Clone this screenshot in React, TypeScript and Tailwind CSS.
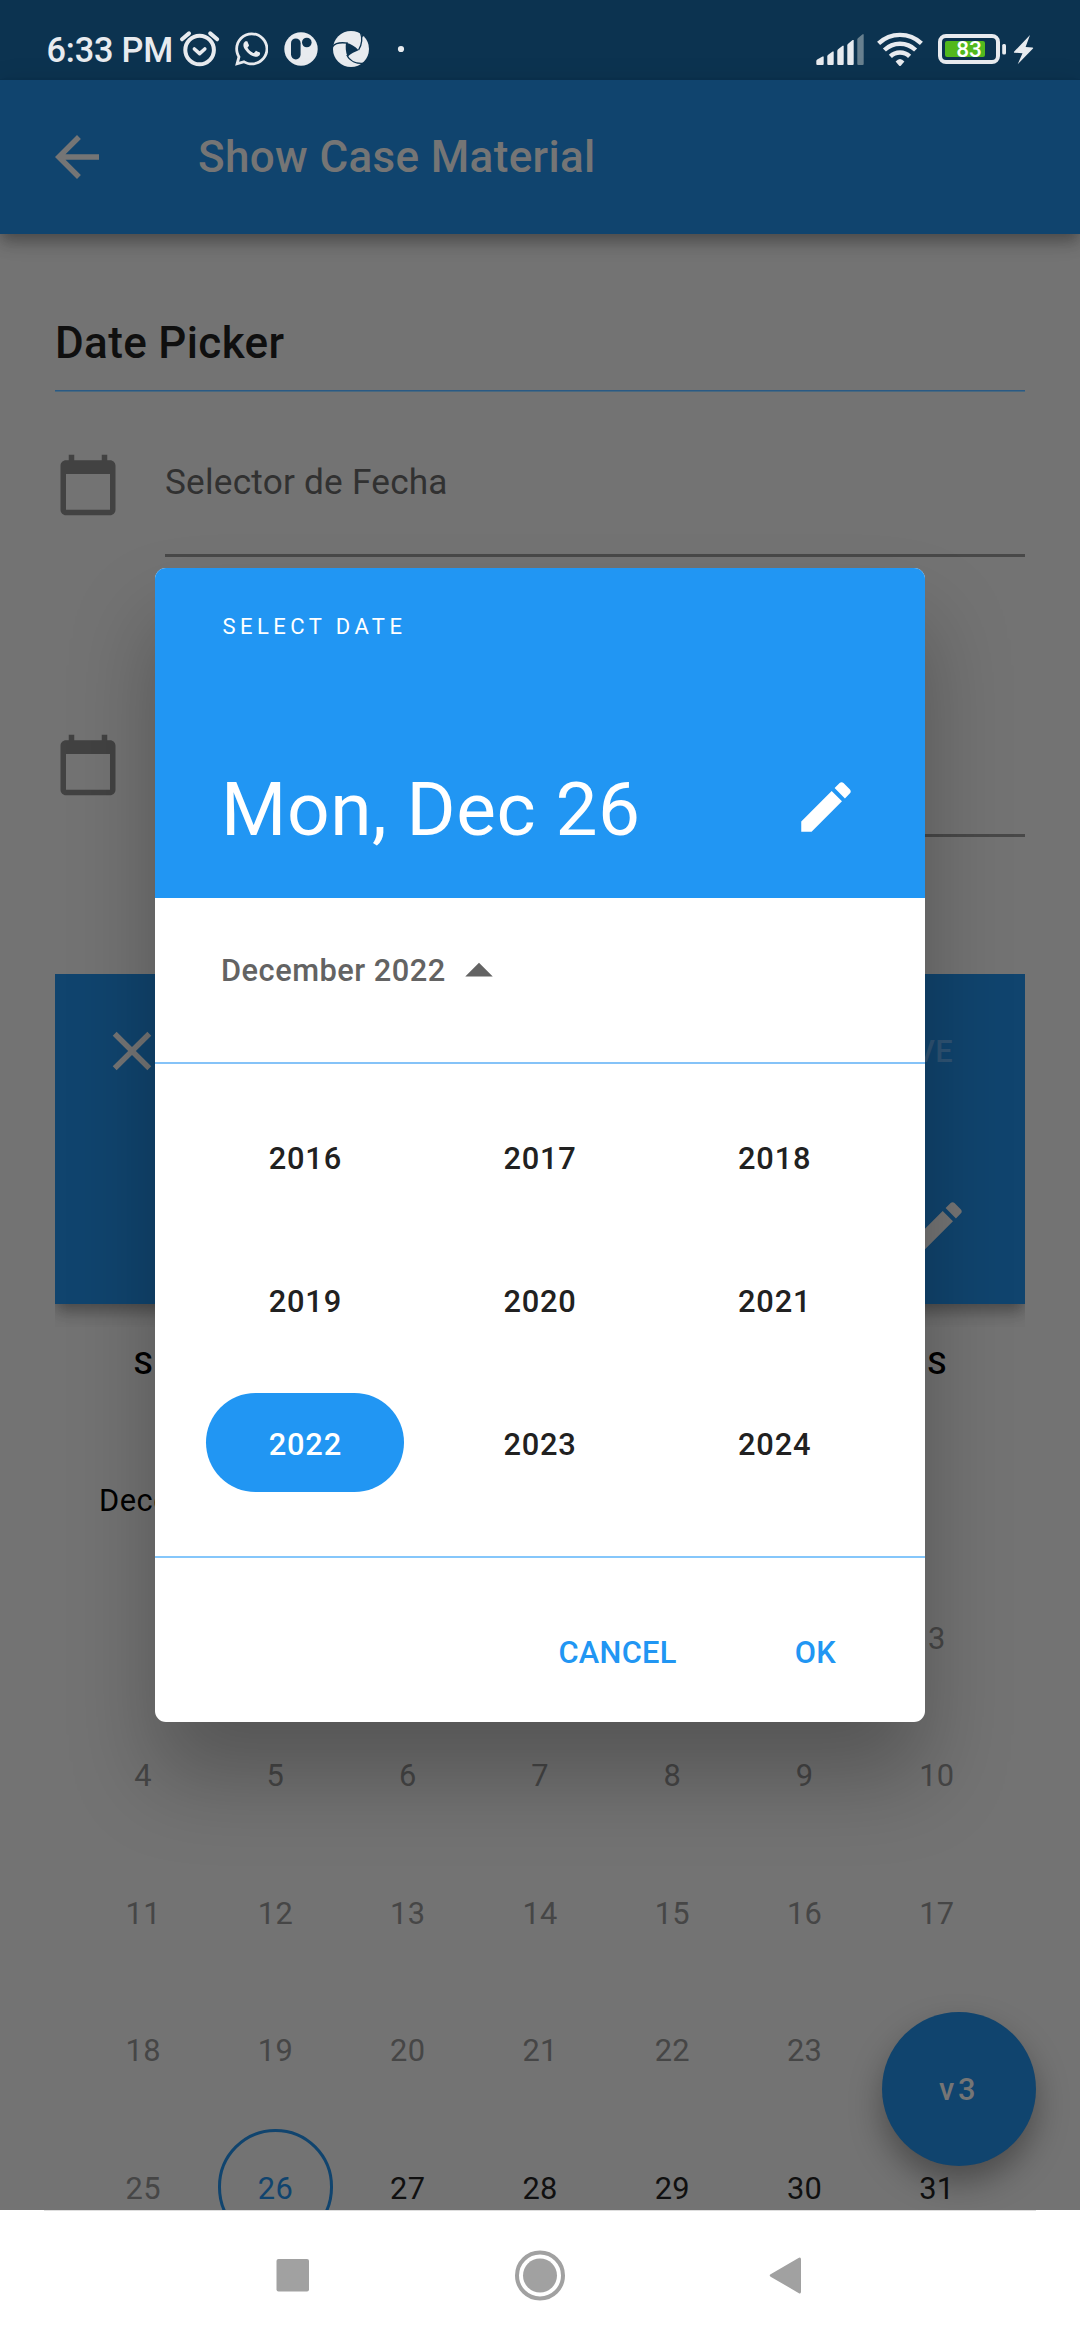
import type { ReactNode } from "react";
import { FaWhatsapp } from "react-icons/fa";

const STATUS_ICON = "#e8ebef";
const STATUS_BG = "#0c3350";

function Glyph({ d, className }: { d: string; className?: string }) {
  return (
    <svg viewBox="0 0 24 24" width={66} height={66} fill="currentColor" className={className}>
      <path d={d} />
    </svg>
  );
}

const PENCIL =
  "M3 17.25V21h3.75L17.81 9.94l-3.75-3.75L3 17.25zM20.71 7.04c.39-.39.39-1.02 0-1.41l-2.34-2.34c-.39-.39-1.02-.39-1.41 0l-1.83 1.83 3.75 3.75 1.83-1.83z";
const CALENDAR =
  "M20 3h-1V1h-2v2H7V1H5v2H4c-1.1 0-2 .9-2 2v16c0 1.1.9 2 2 2h16c1.1 0 2-.9 2-2V5c0-1.1-.9-2-2-2zm0 18H4V8h16v13z";
const ARROW_BACK = "M20 11H7.83l5.59-5.59L12 4l-8 8 8 8 1.41-1.41L7.83 13H20v-2z";
const CLOSE =
  "M19 6.41L17.59 5 12 10.59 6.41 5 5 6.41 10.59 12 5 17.59 6.41 19 12 13.41 17.59 19 19 17.59 13.41 12z";
const DROP_UP = "M7 14l5-5 5 5z";

/* A full-height slice of the status bar, starting at x and w wide. */
function Slice({ x, w, children }: { x: number; w: number; children: ReactNode }) {
  return (
    <svg width={w} height={80} viewBox={`${x} 0 ${w} 80`} fill={STATUS_ICON} className="shrink-0">
      {children}
    </svg>
  );
}

function StatusBar() {
  return (
    <div className="flex h-[80px] shrink-0 items-center justify-between bg-[#0c3350] pl-[46.5px] text-[#e8ebef]">
      <div className="flex items-center">
        <span className="w-[130.5px] pt-[20px] text-[34.3px] leading-[40px] font-medium tracking-[-0.2px] whitespace-nowrap">
          6:33 PM
        </span>
        <Slice x={177} w={57.5}>
          <circle cx="199.6" cy="50" r="14.3" fill="none" stroke={STATUS_ICON} strokeWidth="4" />
          <path
            d="M182 39.3L189 33.4M210.2 33.4L217.2 39.3"
            fill="none"
            stroke={STATUS_ICON}
            strokeWidth="4"
            strokeLinecap="round"
          />
          <path
            d="M194.4 49L199.6 53.6L204.8 49"
            fill="none"
            stroke={STATUS_ICON}
            strokeWidth="3.6"
            strokeLinecap="round"
            strokeLinejoin="round"
          />
        </Slice>
        <FaWhatsapp className="mt-[18px] h-[38px] w-[33.5px] shrink-0" />
        <Slice x={268} w={150}>
          <circle cx="301" cy="49" r="16.7" />
          <rect x="291" y="38.4" width="9.6" height="21" rx="4.8" fill={STATUS_BG} />
          <circle cx="306.8" cy="42.5" r="4.8" fill={STATUS_BG} />
          <circle cx="351" cy="49" r="18" />
          <g fill="none" stroke={STATUS_BG} strokeWidth="1.3">
            <path d="M332.6 46.5C335 43.3 340 42 348 43.2" />
            <path d="M360.3 32C362.6 38 362.3 44 358.6 50" />
            <path d="M364 63.2C357 64 350 61.5 346.8 55" />
          </g>
          <path d="M346 42.8C351 43.6 355 46.6 358.6 50.2C355 51.8 351 53.4 347.6 56.8C345.6 52 345.4 47 346 42.8Z" fill={STATUS_BG} />
          <path d="M360.2 31.5L364 35.2L362.6 37.5Z" fill={STATUS_BG} />
          <circle cx="401" cy="49" r="3.1" />
        </Slice>
      </div>
      <div className="flex items-center">
        <Slice x={812} w={126}>
          <path d="M816.3 61Q816.3 60 817.2 59.4L822.5 56.6H823.7V64Q823.7 65 822.7 65H817.3Q816.3 65 816.3 64Z" />
          <path d="M827.3 56.4Q827.3 55.4 828.2 54.7L832.6 51.4H833.7V64Q833.7 65 832.7 65H828.3Q827.3 65 827.3 64Z" />
          <path d="M837.3 51Q837.3 50 838.1 49.3L842.6 45.7H843.7V64Q843.7 65 842.7 65H838.3Q837.3 65 837.3 64Z" />
          <path d="M847.3 45.4Q847.3 44.4 848.1 43.7L852.6 40H853.7V64Q853.7 65 852.7 65H848.3Q847.3 65 847.3 64Z" />
          <path
            d="M857.3 39.6Q857.3 38.6 858.1 37.9L862.6 34.3H863.7V64Q863.7 65 862.7 65H858.3Q857.3 65 857.3 64Z"
            fill="#68808f"
          />
          <g fill="none" stroke={STATUS_ICON} strokeWidth="4.4">
            <path d="M878.6 43.4A31 31 0 0 1 921.4 43.4" />
            <path d="M884.4 50A22.5 22.5 0 0 1 915.6 50" />
            <path d="M890.4 56.4A13.6 13.6 0 0 1 909.6 56.4" />
          </g>
          <path d="M895.6 61.6Q900 56.6 904.4 61.6L901 65.4Q900 66.4 899 65.4Z" />
        </Slice>
        <div className="mt-[18px] flex h-[30px] w-[62px] items-center rounded-[8px] border-[4px] border-[#e8ebef] pl-[3px]">
          <div className="flex h-[16px] w-[40px] items-center justify-center rounded-[2px] bg-[#52b81d] pt-[2px] pl-[8px] text-[22.6px] leading-[16px] font-medium text-white">
            83
          </div>
        </div>
        <Slice x={1000} w={80}>
          <rect x="1002.2" y="44" width="3.8" height="10.4" rx="1.5" />
          <path d="M1030 35L1014 51.8Q1013.6 52.8 1014.8 52.8L1022.5 53.2L1017.7 64.3L1033 48.6Q1033.6 47.6 1032.4 47.5L1025.6 47Z" />
        </Slice>
      </div>
    </div>
  );
}

function DateField({ label }: { label?: string }) {
  return (
    <div className="flex h-[280px] items-start gap-[44px]">
      <Glyph d={CALENDAR} className="mt-[59.5px] shrink-0 text-[#424242]" />
      <div className="h-[165px] grow border-b-[3px] border-[#484848] pt-[69px] text-[35.2px] leading-[42px] tracking-[0.22px] text-[#313131]">
        {label}
      </div>
    </div>
  );
}

const WEEKS: (number | null)[][] = [
  [null, null, null, null, null, null, 3],
  [4, 5, 6, 7, 8, 9, 10],
  [11, 12, 13, 14, 15, 16, 17],
  [18, 19, 20, 21, 22, 23, null],
  [25, 26, 27, 28, 29, 30, 31],
];
const TODAY = 26;

function Day({ day }: { day: number | null }) {
  if (day === null) return <div />;
  const tone = day === TODAY ? "text-[#10446e]" : day > TODAY ? "text-[#101010]" : "text-[#464646]";
  return (
    <div className="flex items-center justify-center">
      <div
        className={`flex size-[115.5px] items-center justify-center rounded-full border-[3px] pt-[4px] ${
          day === TODAY ? "border-[#10446e]" : "border-transparent"
        } ${tone}`}
      >
        {day}
      </div>
    </div>
  );
}

function InlineCalendar() {
  return (
    <section className="mt-[22px]">
      <div className="h-[353px] overflow-hidden">
        <div className="flex h-[330px] flex-col justify-between bg-[#10446e] pt-[44px] pr-[55px] pb-[44px] pl-[44px] text-[#757575] shadow-[0_5.5px_11px_-2.75px_rgba(0,0,0,0.2),0_11px_13.75px_0_rgba(0,0,0,0.14),0_2.75px_27.5px_0_rgba(0,0,0,0.12)]">
          <div className="flex items-center justify-between pr-[17px]">
            <Glyph d={CLOSE} />
            <span className="pt-[3px] text-[30.8px] font-medium tracking-[0.3px] text-[#2f5475]">SAVE</span>
          </div>
          <Glyph d={PENCIL} className="self-end" />
        </div>
      </div>
      <div className="grid h-[72px] grid-cols-7 items-center px-[22px] pt-[2px] text-center text-[30.8px] font-medium text-black">
        <span>S</span>
        <span className="col-start-7">S</span>
      </div>
      <div className="h-[169px] pt-[84px] pl-[44px] text-[30.8px] leading-[36px] tracking-[0.5px] text-black">
        December 2022
      </div>
      <div className="px-[22px] text-[30.8px] tracking-[0.3px]">
        {WEEKS.map((week, i) => (
          <div key={i} className="grid h-[137.5px] grid-cols-7">
            {week.map((day, j) => (
              <Day key={j} day={day} />
            ))}
          </div>
        ))}
      </div>
    </section>
  );
}

const YEARS = [2016, 2017, 2018, 2019, 2020, 2021, 2022, 2023, 2024];
const SELECTED_YEAR = 2022;

function DatePickerDialog() {
  return (
    <div className="absolute top-[568px] left-[155px] flex h-[1154px] w-[770px] flex-col overflow-hidden rounded-[11px] bg-white shadow-[0_55px_85px_0_rgba(0,0,0,0.26)]">
      <div className="flex h-[330px] flex-col justify-between bg-[#2196f3] pt-[46px] pr-[66px] pb-[58px] pl-[66px] text-white">
        <span className="pl-[1.5px] text-[22px] leading-[26px] tracking-[4.45px]">SELECT DATE</span>
        <div className="flex h-[66px] items-center justify-between">
          <span className="pt-[5px] text-[74.8px] leading-[66px] tracking-[0.6px]">Mon, Dec 26</span>
          <Glyph d={PENCIL} />
        </div>
      </div>
      <div className="flex h-[164px] items-center pb-[18px] pl-[66px] text-[#636363]">
        <span className="pt-[1px] text-[30.8px] font-medium tracking-[0.5px]">December 2022</span>
        <Glyph d={DROP_UP} />
      </div>
      <div className="h-[2px] bg-[#85c3f8]" />
      <div className="grid h-[492px] auto-rows-[143px] grid-cols-3 px-[33px] pt-[21px] text-[30.8px] font-medium tracking-[0.8px] text-[#212121]">
        {YEARS.map((year) => (
          <div key={year} className="flex items-center justify-center">
            <div
              className={`flex h-[99px] w-[198px] items-center justify-center rounded-full pt-[5px] ${
                year === SELECTED_YEAR ? "bg-[#2196f3] text-white" : ""
              }`}
            >
              {year}
            </div>
          </div>
        ))}
      </div>
      <div className="h-[2px] bg-[#85c7fb]" />
      <div className="flex grow items-center justify-end gap-[118px] pt-[27px] pr-[89px] text-[30.8px] font-medium tracking-[0.3px] text-[#2196f3]">
        <span>CANCEL</span>
        <span>OK</span>
      </div>
    </div>
  );
}

function NavigationBar() {
  return (
    <div className="flex h-[130px] shrink-0 flex-col bg-white px-[44px]">
      <div className="h-px bg-[#dedede]" />
      <div className="flex grow items-center justify-center gap-[202px] text-[#a1a1a1]">
        <svg width={60} height={60} viewBox="0 0 60 60" fill="currentColor">
          <rect x="13.5" y="13" width="32.5" height="32.5" rx="2" />
        </svg>
        <svg width={60} height={60} viewBox="0 0 60 60" fill="currentColor" className="ml-[-15px]">
          <circle cx="30" cy="29.5" r="23" fill="none" stroke="currentColor" strokeWidth="4" />
          <circle cx="30" cy="29.5" r="17" />
        </svg>
        <svg width={60} height={60} viewBox="0 0 60 60" fill="currentColor" className="ml-[-15px]">
          <path d="M44 13.5V45.5Q44 48.5 41.5 46.9L13.6 30.7Q11.8 29.5 13.6 28.3L41.5 11.9Q44 10.5 44 13.5Z" />
        </svg>
      </div>
    </div>
  );
}

export default function App() {
  return (
    <div className="relative flex h-[2340px] w-[1080px] flex-col overflow-hidden bg-[#737373] font-['Roboto',sans-serif]">
      <StatusBar />
      <header className="relative z-10 flex h-[154px] shrink-0 items-center gap-[88px] bg-[#10446e] pl-[44px] text-[#757575] shadow-[0_5.5px_11px_-2.75px_rgba(0,0,0,0.2),0_11px_13.75px_0_rgba(0,0,0,0.14),0_2.75px_27.5px_0_rgba(0,0,0,0.12)]">
        <Glyph d={ARROW_BACK} />
        <h1 className="text-[44px] leading-[52px] font-medium tracking-[0.35px]">Show Case Material</h1>
      </header>
      <main className="h-[1976px] shrink-0 overflow-hidden px-[55px]">
        <h2 className="h-[156px] pt-[83px] text-[44px] leading-[52px] font-medium tracking-[0.35px] text-[#0f0f0f]">
          Date Picker
        </h2>
        <div className="h-[2px] border-t border-[#2a5a84] bg-[#48687f]" />
        <DateField label="Selector de Fecha" />
        <DateField />
        <InlineCalendar />
      </main>
      <NavigationBar />
      <div className="absolute top-0 left-0 h-[2210px] w-[1080px] overflow-hidden">
        <button className="absolute top-[2012px] left-[882px] flex size-[154px] items-center justify-center rounded-full bg-[#10446e] pt-[3px] text-[30.8px] font-medium tracking-[3.6px] text-[#757575] shadow-[0_16px_32px_0_rgba(0,0,0,0.34)]">
          v3
        </button>
        <DatePickerDialog />
      </div>
    </div>
  );
}
